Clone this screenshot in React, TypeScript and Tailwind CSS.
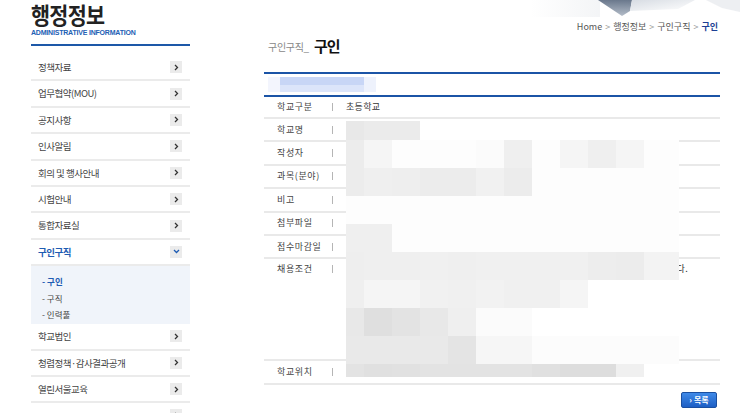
import React from 'react';

const menuTop = ['정책자료', '업무협약(MOU)', '공지사항', '인사알림', '회의 및 행사안내', '시험안내', '통합자료실'];
const menuBottom = ['학교법인', '청렴정책·감사결과공개', '열린서울교육', ''];

const cols = [346, 364, 392, 420, 448, 476, 504, 532, 560, 588, 616, 644, 679];
const rowsY = [121, 140, 168, 196, 224, 252, 280, 308, 336, 364, 377];
const grid: string[][] = [
  ['e8', 'eb', 'eb', '', '', '', '', '', '', '', '', ''],
  ['ec', 'f5', 'fd', 'fd', 'fd', 'fb', 'ef', 'fd', 'f5', 'ef', 'f5', 'fd'],
  ['ec', 'ef', 'ee', 'ec', 'ec', 'f1', 'ec', 'fd', 'fd', 'fd', 'fd', 'fd'],
  ['fd', 'fd', 'fd', 'fd', 'fd', 'fd', 'fd', 'fd', 'fd', 'fd', 'fd', 'fd'],
  ['ef', 'ef', 'fd', 'fd', 'fd', 'fd', 'fd', 'fd', 'fd', 'fd', 'fd', 'fd'],
  ['ee', 'ef', 'ef', 'f0', 'ef', 'f0', 'f0', 'f0', 'f0', 'ed', 'ec', 'f3'],
  ['ef', 'f5', 'f5', 'f1', 'f0', 'f2', 'f0', 'f0', 'f5', 'ff', 'ff', 'ff'],
  ['e8', 'df', 'e3', 'e8', 'ef', 'fb', 'fb', 'ff', 'ff', 'ff', 'ff', 'ff'],
  ['e9', 'e9', 'e9', 'e9', 'e4', 'f6', 'f6', 'fc', 'fc', 'fc', 'fc', 'fc'],
  ['e3', 'e0', 'e1', 'e3', 'e3', 'e3', 'e3', 'e0', 'dd', 'dd', 'f0', ''],
];

function Chevron({ open }: { open?: boolean }) {
  return (
    <div className="flex h-[12px] w-[12px] items-center justify-center bg-[#ebebeb]">
      {open ? (
        <svg width="7" height="5" viewBox="0 0 7 5">
          <path d="M1 1 L3.5 3.5 L6 1" fill="none" stroke="#1e5cb3" strokeWidth="1.3" />
        </svg>
      ) : (
        <svg width="5" height="7" viewBox="0 0 5 7">
          <path d="M1 1 L3.5 3.5 L1 6" fill="none" stroke="#333" strokeWidth="1.3" />
        </svg>
      )}
    </div>
  );
}

function MenuRow({ label, active }: { label: string; active?: boolean }) {
  return (
    <div className="box-border flex h-[26.4px] items-center justify-between border-b-2 border-[#ebebeb] pl-[7px] pr-[8px]">
      <span className={`text-[9.5px] tracking-[-0.5px] ${active ? 'font-bold text-[#1e5cb3]' : 'text-[#444]'}`}>{label}</span>
      <Chevron open={active} />
    </div>
  );
}

function Row({ label, h, children, top }: { label: string; h: string; children?: React.ReactNode; top?: boolean }) {
  return (
    <div className={`box-border flex border-b-2 border-[#e9e9e9] ${h} ${top ? 'items-start pt-[3px]' : 'items-center'}`}>
      <div className="flex w-[68px] items-center pl-[13px]">
        <span className="text-[9px] leading-[14px] tracking-[0.6px] text-[#444]">{label}</span>
      </div>
      <div className={`h-[8px] w-px bg-[#b5b5b5] ${top ? 'mt-[3px]' : ''}`} />
      <div className="ml-[13px] flex-1 text-[9px] leading-[14px] tracking-[0.3px] text-[#333]">{children}</div>
    </div>
  );
}

export default function App() {
  return (
    <div className="relative h-[413px] w-[740px] overflow-hidden bg-white font-['Noto_Sans_CJK_KR',sans-serif]">
      {/* top-right decoration */}
      <svg className="absolute right-0 top-0" width="230" height="22" viewBox="0 0 230 22">
        <defs>
          <linearGradient id="fade" x1="0" y1="0" x2="1" y2="0">
            <stop offset="0" stopColor="#ffffff" />
            <stop offset="1" stopColor="#eceef1" />
          </linearGradient>
          <linearGradient id="dark" x1="0" y1="0" x2="0" y2="1">
            <stop offset="0" stopColor="#6a788c" />
            <stop offset="1" stopColor="#b4bdc9" />
          </linearGradient>
          <linearGradient id="light" x1="0" y1="0" x2="1" y2="1">
            <stop offset="0" stopColor="#d7dce3" />
            <stop offset="1" stopColor="#ffffff" />
          </linearGradient>
        </defs>
        <rect x="20" y="0" width="70" height="17" fill="url(#fade)" opacity="0.6" />
        <polygon points="88,0 122,0 120,11 112,16" fill="url(#dark)" />
        <polygon points="122,0 185,0 168,9 120,11" fill="url(#light)" />
        <polygon points="196,0 230,0 230,12 212,8" fill="#e8ebef" opacity="0.8" />
      </svg>

      <div className="flex">
        {/* sidebar */}
        <div className="ml-[31px] w-[159px]">
          <div className="h-[27px] pt-[2px]">
            <div className="origin-left scale-x-[0.9] text-[23px] font-bold leading-[25px] tracking-[-0.8px] text-[#222]">행정정보</div>
          </div>
          <div className="mt-[1px] h-[10px] font-['Liberation_Sans',sans-serif] text-[7px] font-bold leading-[10px] tracking-[-0.2px] text-[#2260b4]">
            ADMINISTRATIVE INFORMATION
          </div>
          <div className="mt-[6px] h-[2px] bg-[#1d58a8]" />
          <div className="mt-[9px]">
            {menuTop.map((m) => (
              <MenuRow key={m} label={m} />
            ))}
            <MenuRow label="구인구직" active />
            <div className="h-[58px] bg-[#f0f4fa] pl-[11px] pt-[7px] text-[8.5px] leading-[16.5px]">
              <div className="font-bold text-[#1e5cb3]">- 구인</div>
              <div className="text-[#444]">- 구직</div>
              <div className="text-[#444]">- 인력풀</div>
            </div>
            {menuBottom.map((m, i) => (
              <MenuRow key={i} label={m} />
            ))}
          </div>
        </div>

        {/* content */}
        <div className="ml-[74px] w-[456px]">
          <div className="h-[33px] pr-[2px] pt-[21px] text-right text-[9px] leading-[12px] text-[#555]">
            Home<span className="mx-[3px] text-[#999]">&gt;</span>행정정보<span className="mx-[3px] text-[#999]">&gt;</span>구인구직
            <span className="mx-[3px] text-[#999]">&gt;</span>
            <span className="font-bold text-[#1c3f94]">구인</span>
          </div>
          <div className="mt-[3px] flex h-[20px] items-center pl-[4px]">
            <span className="text-[10px] tracking-[-0.3px] text-[#888]">구인구직_</span>
            <span className="ml-[5px] text-[15px] font-bold tracking-[-1px] text-[#111]">구인</span>
          </div>
          <div className="mt-[16px] h-[2px] bg-[#1b54a6]" />
          <div className="relative h-[21px]">
            <svg className="absolute left-[4px] top-[3px]" width="110" height="15" viewBox="0 0 110 15">
              <rect x="0" y="0" width="12" height="15" fill="#f3f5fd" />
              <rect x="12" y="0" width="84" height="8" fill="#c8d6f6" />
              <rect x="12" y="8" width="84" height="7" fill="#dce5fa" />
              <rect x="96" y="0" width="12" height="15" fill="#eef2fc" />
            </svg>
          </div>
          <div className="h-[2px] bg-[#1b54a6]" />
          <Row label="학교구분" h="h-[22px]">초등학교</Row>
          <Row label="학교명" h="h-[23.4px]" />
          <Row label="작성자" h="h-[23.4px]" />
          <Row label="과목(분야)" h="h-[23.4px]" />
          <Row label="비고" h="h-[23.4px]" />
          <Row label="첨부파일" h="h-[23.4px]" />
          <Row label="접수마감일" h="h-[23.4px]" />
          <Row label="채용조건" h="h-[102px]" top>
            <div className="pr-[32px] text-right">바랍니다.</div>
          </Row>
          <Row label="학교위치" h="h-[23.4px]" />
          <div className="mt-[7px] flex justify-end pr-[3px]">
            <div className="flex h-[16px] w-[36px] items-center justify-center gap-[2px] rounded-[2px] border border-[#1a4fa0] bg-gradient-to-b from-[#3f8ae8] to-[#1d5ec4] text-[8px] font-bold text-white">
              <span>›</span>
              <span>목록</span>
            </div>
          </div>
        </div>
      </div>

      {/* blurred mosaic over table values */}
      <svg className="absolute left-[346px] top-[121px]" width="333" height="256" viewBox="0 0 333 256">
        {grid.map((row, r) =>
          row.map((v, c) =>
            v ? (
              <rect
                key={`${r}-${c}`}
                x={cols[c] - 346}
                y={rowsY[r] - 121}
                width={cols[c + 1] - cols[c]}
                height={rowsY[r + 1] - rowsY[r]}
                fill={`#${v}${v}${v}`}
              />
            ) : null
          )
        )}
      </svg>
    </div>
  );
}
